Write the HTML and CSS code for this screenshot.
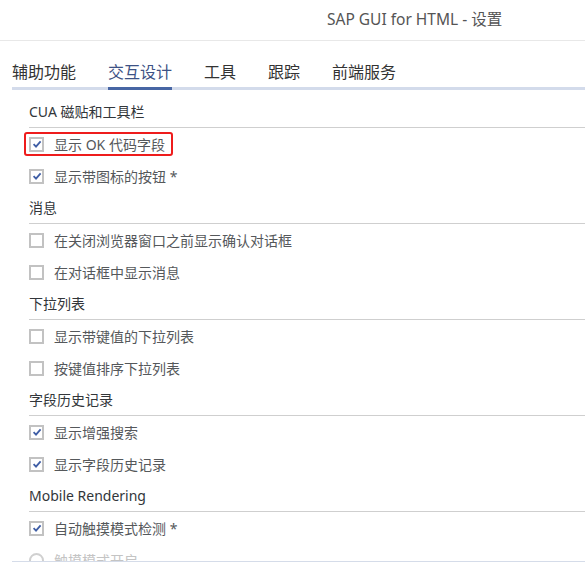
FILE: index.html
```html
<!DOCTYPE html>
<html lang="zh-CN">
<head>
    <meta charset="UTF-8">
    <meta name="viewport" content="width=device-width, initial-scale=1.0">
    <title>SAP GUI for HTML - 设置</title>
    <link rel="stylesheet" href="styles.css">
</head>
<body>
    <div class="title-bar">SAP GUI for HTML - 设置</div>

    <!-- Pestañas de configuración -->
    <div class="tabs">
        <span class="tab">辅助功能</span>
        <span class="tab active">交互设计</span>
        <span class="tab">工具</span>
        <span class="tab">跟踪</span>
        <span class="tab">前端服务</span>
    </div>

    <div class="panel">
        <div class="group-title">CUA 磁贴和工具栏</div>
        <div class="option">
            <span class="highlight">
                <span class="check on"><svg viewBox="0 0 10 10"><path d="M1.6 5.2 L4 7.6 L8.6 2.4"/></svg></span>
                显示 OK 代码字段
            </span>
        </div>
        <div class="option">
            <span class="check on"><svg viewBox="0 0 10 10"><path d="M1.6 5.2 L4 7.6 L8.6 2.4"/></svg></span>
            显示带图标的按钮 *
        </div>

        <div class="group-title">消息</div>
        <div class="option"><span class="check"></span>在关闭浏览器窗口之前显示确认对话框</div>
        <div class="option"><span class="check"></span>在对话框中显示消息</div>

        <div class="group-title">下拉列表</div>
        <div class="option"><span class="check"></span>显示带键值的下拉列表</div>
        <div class="option"><span class="check"></span>按键值排序下拉列表</div>

        <div class="group-title">字段历史记录</div>
        <div class="option">
            <span class="check on"><svg viewBox="0 0 10 10"><path d="M1.6 5.2 L4 7.6 L8.6 2.4"/></svg></span>
            显示增强搜索
        </div>
        <div class="option">
            <span class="check on"><svg viewBox="0 0 10 10"><path d="M1.6 5.2 L4 7.6 L8.6 2.4"/></svg></span>
            显示字段历史记录
        </div>

        <div class="group-title">Mobile Rendering</div>
        <div class="option">
            <span class="check on"><svg viewBox="0 0 10 10"><path d="M1.6 5.2 L4 7.6 L8.6 2.4"/></svg></span>
            自动触摸模式检测 *
        </div>
        <div class="option disabled"><span class="radio"></span>触摸模式开启</div>
    </div>
</body>
</html>
```

FILE: styles.css
```css
/* Ventana de ajustes */
body {
    margin: 0;
    padding: 0;
    background: #fff;
    font-family: "Noto Sans", "Noto Sans CJK SC", sans-serif;
    color: #32363a;
}

.title-bar {
    height: 40px;
    line-height: 38px;
    padding-left: 327px;
    font-size: 15.5px;
    color: #555;
    border-bottom: 1px solid #e8e8e8;
}

/* Pestañas */
.tabs {
    display: flex;
    margin-left: 12px;
    padding-top: 20px;
    border-bottom: 3px solid #d3dbeb;
}

.tab {
    font-size: 16px;
    line-height: 22px;
    padding-bottom: 4px;
    margin-right: 32px;
    margin-bottom: -3px;
    border-bottom: 3px solid transparent;
    color: #333;
}

.tab.active {
    color: #3d5285;
    border-bottom-color: #4766a4;
}

/* Contenido */
.panel {
    margin-left: 12px;
    padding: 6px 0 0 17px;
    height: 465px;
    overflow: hidden;
    border-bottom: 1px solid #d5dce9;
}

.group-title {
    height: 31px;
    line-height: 31px;
    font-size: 14px;
    color: #32363a;
    border-bottom: 1px solid #cfcfcf;
}

.option {
    display: flex;
    align-items: center;
    height: 32px;
    font-size: 14px;
    color: #55585b;
}

.check {
    box-sizing: border-box;
    width: 15px;
    height: 15px;
    margin-right: 10px;
    border: 2px solid #c2c2c2;
    background: #fff;
    display: flex;
    align-items: center;
    justify-content: center;
}

.check svg {
    width: 10px;
    height: 10px;
    fill: none;
    stroke: #3f5ea6;
    stroke-width: 1.8;
}

/* Marco rojo alrededor de la opción */
.highlight {
    display: inline-flex;
    align-items: center;
    height: 20px;
    margin-left: -5px;
    padding: 0 6px 0 3px;
    border: 2px solid #ee1c1c;
    border-radius: 3px;
}

.radio {
    box-sizing: border-box;
    width: 15px;
    height: 15px;
    margin-right: 10px;
    border: 2px solid #d0d0d0;
    border-radius: 50%;
}

.option.disabled {
    color: #c4c4c4;
}
```
